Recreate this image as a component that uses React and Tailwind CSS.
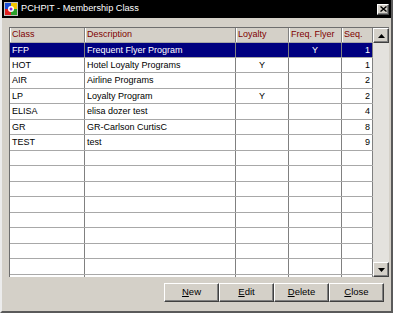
import React from 'react';

const rows = [
  { code: 'FFP', desc: 'Frequent Flyer Program', loyalty: '', freq: 'Y', seq: '1', selected: true },
  { code: 'HOT', desc: 'Hotel Loyalty Programs', loyalty: 'Y', freq: '', seq: '1' },
  { code: 'AIR', desc: 'Airline Programs', loyalty: '', freq: '', seq: '2' },
  { code: 'LP', desc: 'Loyalty Program', loyalty: 'Y', freq: '', seq: '2' },
  { code: 'ELISA', desc: 'elisa dozer test', loyalty: '', freq: '', seq: '4' },
  { code: 'GR', desc: 'GR-Carlson CurtisC', loyalty: '', freq: '', seq: '8' },
  { code: 'TEST', desc: 'test', loyalty: '', freq: '', seq: '9' },
];

// pad the grid out with blank rows so it fills the box
const blanks = Array.from({ length: 10 }, (_, i) => ({ code: '', desc: '', loyalty: '', freq: '', seq: '', key: 'b' + i }));

const cols = [
  { key: 'code', label: 'Class', w: 'w-[75px]', align: 'text-left' },
  { key: 'desc', label: 'Description', w: 'w-[151px]', align: 'text-left' },
  { key: 'loyalty', label: 'Loyalty', w: 'w-[53px]', align: 'text-center' },
  { key: 'freq', label: 'Freq. Flyer', w: 'w-[53px]', align: 'text-center' },
  { key: 'seq', label: 'Seq.', w: 'w-[31px]', align: 'text-right' },
];

const AppIcon = () => (
  <svg width="14" height="14" viewBox="0 0 14 14">
    <rect x="0" y="0" width="14" height="14" fill="#c0c0c0" />
    <rect x="1" y="1" width="6" height="6" fill="#1d4fd8" />
    <rect x="7" y="1" width="6" height="6" fill="#f2c500" />
    <rect x="1" y="7" width="6" height="6" fill="#e02020" />
    <rect x="7" y="7" width="6" height="6" fill="#2aa02a" />
    <circle cx="7" cy="7" r="3" fill="#ffffff" />
    <circle cx="7" cy="7" r="1.5" fill="#8a2be2" />
  </svg>
);

const Arrow = ({ up }) => (
  <svg width="7" height="4" viewBox="0 0 7 4">
    {up ? <polygon points="3.5,0 7,4 0,4" fill="#000" /> : <polygon points="0,0 7,0 3.5,4" fill="#000" />}
  </svg>
);

const raised = 'border border-t-white border-l-white border-r-[#404040] border-b-[#404040] shadow-[inset_-1px_-1px_0_#808080]';

const Button = ({ label }) => (
  <button className={`w-[55px] h-[19px] bg-[#d4d0c8] text-[9.5px] text-black flex items-center justify-center ${raised}`}>
    <span><span className="underline">{label[0]}</span>{label.slice(1)}</span>
  </button>
);

export default function App() {
  return (
    <div
      className="w-[393px] h-[313px] bg-[#d4d0c8] flex flex-col border-x-2 border-b-2 border-l-[#ececec] border-r-[#5a5a5a] border-b-[#5a5a5a] overflow-hidden"
      style={{ fontFamily: '"Liberation Sans", Arial, sans-serif' }}
    >
      <div className="h-[18px] bg-black flex items-center shrink-0">
        <div className="ml-[2px] mr-[3px]"><AppIcon /></div>
        <span className="text-white text-[9.2px] leading-none">PCHPIT - Membership Class</span>
        <div className={`ml-auto mr-[2px] w-[12px] h-[11px] bg-[#d4d0c8] flex items-center justify-center ${raised}`}>
          <svg width="7" height="6" viewBox="0 0 7 6">
            <path d="M0.5 0.5 L6.5 5.5 M6.5 0.5 L0.5 5.5" stroke="#000" strokeWidth="1.4" />
          </svg>
        </div>
      </div>

      <div className="pl-[7px] pt-[9px] flex">
        <div className="h-[250px] flex border-t border-l border-t-[#6e6e6e] border-l-[#6e6e6e]">
          <div className="flex flex-col overflow-hidden bg-white">
            <div className="flex h-[14px] shrink-0 bg-[#d4d0c8]">
              {cols.map((c) => (
                <div
                  key={c.key}
                  className={`${c.w} h-full border-r border-r-[#808080] border-l border-l-white text-[9px] leading-[13px] text-[#800000] pl-[1px] truncate`}
                >
                  {c.label}
                </div>
              ))}
            </div>
            {[...rows, ...blanks].map((r, i) => (
              <div
                key={r.key || r.code}
                className={`flex h-[15.5px] shrink-0 border-b border-b-[#a8a8a8] ${r.selected ? 'bg-[#000080] text-white' : 'text-black'} ${i === 0 ? 'border-t border-t-[#a8a8a8]' : ''}`}
              >
                {cols.map((c) => (
                  <div
                    key={c.key}
                    className={`${c.w} h-full border-r border-r-[#808080] text-[9px] leading-[14px] px-[2px] truncate ${c.align}`}
                  >
                    {r[c.key]}
                  </div>
                ))}
              </div>
            ))}
          </div>
          <div className="w-[16px] flex flex-col bg-[#e4e2de]">
            <div className={`h-[15px] bg-[#d4d0c8] flex items-center justify-center shrink-0 ${raised}`}>
              <Arrow up />
            </div>
            <div className="flex-1" />
            <div className={`h-[15px] bg-[#d4d0c8] flex items-center justify-center shrink-0 ${raised}`}>
              <Arrow />
            </div>
          </div>
        </div>
      </div>

      <div className="flex justify-end pr-[7px] mt-[6px]">
        <Button label="New" />
        <Button label="Edit" />
        <Button label="Delete" />
        <Button label="Close" />
      </div>
    </div>
  );
}
